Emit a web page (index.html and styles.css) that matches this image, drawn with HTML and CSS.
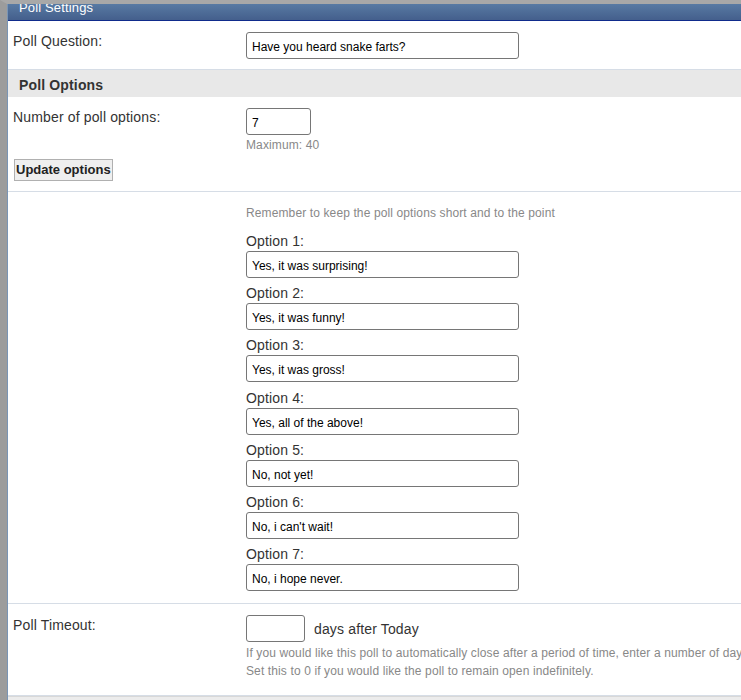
FILE: index.html
```html
<!DOCTYPE html>
<html lang="en">
<head>
  <meta charset="UTF-8">
  <title>Poll Settings</title>
  <link rel="stylesheet" href="styles.css">
</head>
<body>

<div class="page">
  <div class="panel">
    <!-- Panel title bar -->
    <div class="titlebar">Poll Settings</div>

    <div class="row">
      <div class="label">Poll Question:</div>
      <div class="value">
        <input type="text" class="wide" value="Have you heard snake farts?">
      </div>
    </div>

    <div class="section">Poll Options</div>

    <div class="row noline">
      <div class="label">Number of poll options:</div>
      <div class="value">
        <input type="text" class="small" value="7">
        <div class="hint">Maximum: 40</div>
      </div>
    </div>
    <div class="buttonrow">
      <button>Update options</button>
    </div>

    <!-- Options list -->
    <div class="row options">
      <div class="label"></div>
      <div class="value">
        <div class="hint first">Remember to keep the poll options short and to the point</div>
        <div class="option">
          <div class="optlabel">Option 1:</div>
          <input type="text" class="wide" value="Yes, it was surprising!">
        </div>
        <div class="option">
          <div class="optlabel">Option 2:</div>
          <input type="text" class="wide" value="Yes, it was funny!">
        </div>
        <div class="option">
          <div class="optlabel">Option 3:</div>
          <input type="text" class="wide" value="Yes, it was gross!">
        </div>
        <div class="option">
          <div class="optlabel">Option 4:</div>
          <input type="text" class="wide" value="Yes, all of the above!">
        </div>
        <div class="option">
          <div class="optlabel">Option 5:</div>
          <input type="text" class="wide" value="No, not yet!">
        </div>
        <div class="option">
          <div class="optlabel">Option 6:</div>
          <input type="text" class="wide" value="No, i can't wait!">
        </div>
        <div class="option">
          <div class="optlabel">Option 7:</div>
          <input type="text" class="wide" value="No, i hope never.">
        </div>
      </div>
    </div>

    <div class="row timeout">
      <div class="label">Poll Timeout:</div>
      <div class="value">
        <div class="inline">
          <input type="text" class="days" value="">
          <span class="after">days after Today</span>
        </div>
        <div class="hint">If you would like this poll to automatically close after a period of time, enter a number of days here.</div>
        <div class="hint">Set this to 0 if you would like the poll to remain open indefinitely.</div>
      </div>
    </div>

    <div class="footer"></div>
  </div>
</div>

</body>
</html>
```

FILE: styles.css
```css
* {
  box-sizing: border-box;
}

html, body {
  margin: 0;
  padding: 0;
  overflow: hidden;
}

body {
  font-family: "Liberation Sans", Arial, sans-serif;
  font-size: 14px;
  letter-spacing: 0.15px;
  color: #333;
  background: #fff;
}

.page {
  display: flex;
  border-left: 7px solid #9c9c9c;
  border-top: 4px solid #a8a8a8;
  min-height: 700px;
}

.panel {
  flex: 1;
  border-left: 1px solid #7a95b5;
  min-width: 900px;
}

.titlebar {
  height: 17px;
  line-height: 8px;
  padding-left: 11px;
  color: #fff;
  font-size: 13px;
  background: linear-gradient(#587aa3, #445f8c);
  border-bottom: 1px solid #0f2b8c;
  overflow: hidden;
}

.row {
  display: flex;
  border-bottom: 1px solid #d6dde6;
}

.noline {
  border-bottom: none;
}

.label {
  width: 238px;
  padding: 12px 5px 0;
  flex-shrink: 0;
}

.value {
  flex: 1;
  padding: 11px 0 10px;
  white-space: nowrap;
}

.row:first-of-type {
  border-bottom: 1px solid #d0d0d0;
}

.noline .value {
  padding-bottom: 3px;
}

input {
  font-family: "Liberation Sans", Arial, sans-serif;
  font-size: 12px;
  color: #000;
  height: 27px;
  padding: 2px 5px 0;
  border: 1px solid #767676;
  border-radius: 3px;
  display: block;
}

.wide {
  width: 273px;
}

.small {
  width: 65px;
}

.days {
  width: 59px;
  height: 27px;
}

.section {
  height: 27px;
  padding: 7px 11px 0;
  background: #e8e8e8;
  font-weight: bold;
  font-size: 14px;
}

.hint {
  color: #888;
  font-size: 12px;
  letter-spacing: 0.12px;
  margin-top: 3px;
}

.buttonrow {
  padding: 4px 0 10px 6px;
  border-bottom: 1px solid #d6dde6;
}

button {
  font-family: "Liberation Sans", Arial, sans-serif;
  font-size: 13px;
  font-weight: bold;
  letter-spacing: 0;
  color: #222;
  background: #efefef;
  border: 1px solid #b0b0b0;
  padding: 2px 1px 3px;
  height: 22px;
}

.options .value {
  padding-top: 14px;
  padding-bottom: 12px;
}

.hint.first {
  margin: 0 0 13px;
}

.option {
  margin-bottom: 7px;
}

.option:nth-child(4) {
  margin-bottom: 8px;
}

.option:last-child {
  margin-bottom: 0;
}

.optlabel {
  font-size: 14px;
  margin-bottom: 2px;
}

.timeout .value {
  padding-top: 11px;
  padding-bottom: 17px;
}

.timeout .label {
  padding-top: 13px;
}

.inline {
  display: flex;
  align-items: center;
  gap: 9px;
}

.after {
  font-size: 14px;
}

.timeout .hint {
  margin-top: 5px;
  line-height: 13px;
}

.footer {
  height: 40px;
  background: #ececec;
  border-top: 1px solid #d8d8d8;
}
```
